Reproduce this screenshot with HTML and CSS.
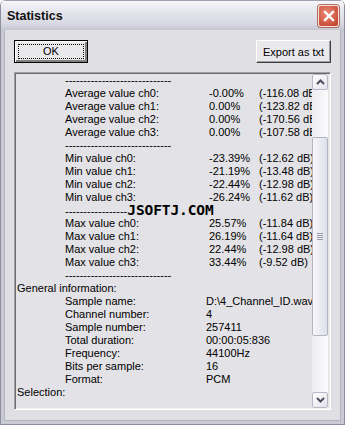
FILE: index.html
```html
<!DOCTYPE html>
<html lang="en">
<head>
    <meta charset="UTF-8">
    <title>Statistics</title>
    <link rel="stylesheet" href="styles.css">
</head>
<body>
    <div class="window">
        <!-- Title bar -->
        <div class="titlebar">
            <span class="title">Statistics</span>
            <span class="close">
                <svg width="12" height="12" viewBox="0 0 12 12">
                    <path d="M2 2 L10 10 M10 2 L2 10" stroke="#fff" stroke-width="2.4" stroke-linecap="square"/>
                </svg>
            </span>
        </div>

        <div class="body">
            <div class="toolbar">
                <button class="btn btn-default"><span class="focus">OK</span></button>
                <button class="btn">Export as txt</button>
            </div>

            <div class="listbox">
                <div class="lines">
                    <div class="row"><span class="label">-----------------------------</span></div>
                    <div class="row"><span class="label">Average value ch0:</span><span>-0.00%</span><span>(-116.08 dB)</span></div>
                    <div class="row"><span class="label">Average value ch1:</span><span>0.00%</span><span>(-123.82 dB)</span></div>
                    <div class="row"><span class="label">Average value ch2:</span><span>0.00%</span><span>(-170.56 dB)</span></div>
                    <div class="row"><span class="label">Average value ch3:</span><span>0.00%</span><span>(-107.58 dB)</span></div>
                    <div class="row"><span class="label">-----------------------------</span></div>
                    <div class="row"><span class="label">Min value ch0:</span><span>-23.39%</span><span>(-12.62 dB)</span></div>
                    <div class="row"><span class="label">Min value ch1:</span><span>-21.19%</span><span>(-13.48 dB)</span></div>
                    <div class="row"><span class="label">Min value ch2:</span><span>-22.44%</span><span>(-12.98 dB)</span></div>
                    <div class="row"><span class="label">Min value ch3:</span><span>-26.24%</span><span>(-11.62 dB)</span></div>
                    <div class="row"><span class="label">-----------------<b class="mark">JSOFTJ.COM</b></span></div>
                    <div class="row"><span class="label">Max value ch0:</span><span>25.57%</span><span>(-11.84 dB)</span></div>
                    <div class="row"><span class="label">Max value ch1:</span><span>26.19%</span><span>(-11.64 dB)</span></div>
                    <div class="row"><span class="label">Max value ch2:</span><span>22.44%</span><span>(-12.98 dB)</span></div>
                    <div class="row"><span class="label">Max value ch3:</span><span>33.44%</span><span>(-9.52 dB)</span></div>
                    <div class="row"><span class="label">-----------------------------</span></div>
                    <div class="row"><span class="head">General information:</span></div>
                    <div class="row info"><span class="label">Sample name:</span><span>D:\4_Channel_ID.wav</span></div>
                    <div class="row info"><span class="label">Channel number:</span><span>4</span></div>
                    <div class="row info"><span class="label">Sample number:</span><span>257411</span></div>
                    <div class="row info"><span class="label">Total duration:</span><span>00:00:05:836</span></div>
                    <div class="row info"><span class="label">Frequency:</span><span>44100Hz</span></div>
                    <div class="row info"><span class="label">Bits per sample:</span><span>16</span></div>
                    <div class="row info"><span class="label">Format:</span><span>PCM</span></div>
                    <div class="row"><span class="head">Selection:</span></div>
                </div>

                <div class="scrollbar">
                    <div class="sb-btn">
                        <svg width="9" height="6" viewBox="0 0 9 6"><path d="M1 5 L4.5 1.5 L8 5" fill="none" stroke="#4d4d60" stroke-width="2"/></svg>
                    </div>
                    <div class="track">
                        <div class="thumb">
                            <span class="grip"></span>
                        </div>
                    </div>
                    <div class="sb-btn">
                        <svg width="9" height="6" viewBox="0 0 9 6"><path d="M1 1 L4.5 4.5 L8 1" fill="none" stroke="#4d4d60" stroke-width="2"/></svg>
                    </div>
                </div>
            </div>
        </div>
    </div>
</body>
</html>
```

FILE: styles.css
```css
/* Window */
body {
    margin: 0;
    background: #fff;
    font-family: "Liberation Sans", Arial, sans-serif;
    font-size: 11px;
    color: #000;
}

.window {
    width: 345px;
    height: 425px;
    box-sizing: border-box;
    display: flex;
    flex-direction: column;
    background: #e0dfe3;
    border: 1px solid #8e8e9c;
    border-top: none;
    border-radius: 6px 6px 0 0;
    overflow: hidden;
}

.titlebar {
    height: 30px;
    flex: none;
    display: flex;
    align-items: center;
    justify-content: space-between;
    padding: 0 5px 0 6px;
    background: linear-gradient(#f7f7fa, #e6e6ee 35%, #d8d8e2 80%, #c6c6d2);
    border-top: 1px solid #a0a0b0;
    box-sizing: border-box;
}

.title {
    font-weight: bold;
    font-size: 12.5px;
    color: #111;
}

.close {
    width: 19px;
    height: 20px;
    display: flex;
    align-items: center;
    justify-content: center;
    border: 1px solid #f4e2dc;
    border-radius: 3px;
    background: radial-gradient(circle at 40% 35%, #e88a74, #d15a44 60%, #b9402c);
    box-shadow: 0 0 0 1px #b06c60;
}

.body {
    flex: 1;
    display: flex;
    flex-direction: column;
    padding: 10px 10px 11px 10px;
    border-left: 3px solid #cacad4;
    border-right: 3px solid #cacad4;
    border-bottom: 3px solid #cacad4;
    box-shadow: inset 1px 0 0 #b4b4c0, inset -1px 0 0 #b4b4c0, inset 0 -1px 0 #b4b4c0;
}

/* Buttons */
.toolbar {
    display: flex;
    justify-content: space-between;
    height: 23px;
    margin-bottom: 9px;
}

.btn {
    font-family: "Liberation Sans", Arial, sans-serif;
    font-size: 11px;
    color: #000;
    background: #e9e9ec;
    border: 1px solid;
    border-color: #fff #404040 #404040 #fff;
    box-shadow: inset -1px -1px 0 #a0a0a0;
    padding: 0;
    width: 75px;
    height: 23px;
}

.btn-default {
    width: 74px;
    border: 1px solid #000;
    box-shadow: inset 1px 1px 0 #fff, inset -2px -2px 0 #808080;
    padding: 3px;
}

.focus {
    display: block;
    height: 100%;
    box-sizing: border-box;
    border: 1px dotted #000;
    line-height: 13px;
}

/* List box */
.listbox {
    flex: 1;
    display: flex;
    border: 1px solid;
    border-color: #a0a0a4 #fff #fff #a0a0a4;
    box-shadow: inset 1px 1px 0 #6e6e70, inset -1px -1px 0 #f2f1ec;
    background: #e3e2e6;
    padding: 1px 2px 1px 1px;
    overflow: hidden;
}

.lines {
    flex: 1;
    padding-left: 1px;
    overflow: hidden;
    white-space: nowrap;
}

.row {
    display: grid;
    grid-template-columns: 192px 50px auto;
    height: 13px;
    line-height: 13px;
}

.row.info {
    grid-template-columns: 189px auto;
}

.label {
    padding-left: 48px;
}

.head {
    grid-column: 1 / 4;
}

.mark {
    font-family: "DejaVu Sans Mono", monospace;
    font-size: 14.5px;
    letter-spacing: -0.1px;
}

/* Scroll bar */
.scrollbar {
    width: 16px;
    display: flex;
    flex-direction: column;
    background: linear-gradient(90deg, #ededf2, #fbfbfd);
}

.sb-btn {
    height: 16px;
    box-sizing: border-box;
    display: flex;
    align-items: center;
    justify-content: center;
    border: 1px solid #b8b8c8;
    border-radius: 2px;
    background: linear-gradient(135deg, #ffffff, #e2e2ea);
}

.track {
    flex: 1;
    padding-top: 47px;
    padding-bottom: 56px;
}

.thumb {
    height: 100%;
    box-sizing: border-box;
    border: 1px solid #b4b4c4;
    border-radius: 2px;
    background: linear-gradient(90deg, #f6f6fa, #e0e0ea);
    display: flex;
    align-items: center;
    justify-content: center;
}

.grip {
    width: 6px;
    height: 7px;
    background: repeating-linear-gradient(#9a9aac 0 1px, transparent 1px 2px);
}
```
